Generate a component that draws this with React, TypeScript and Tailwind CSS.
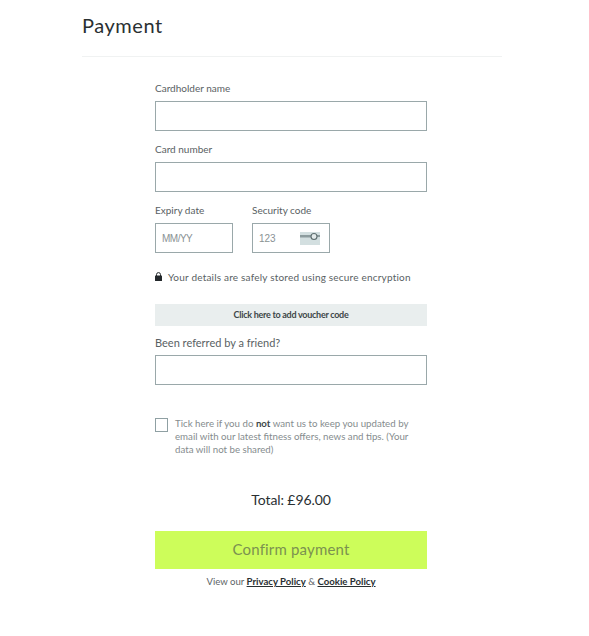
const font = { fontFamily: '"Lato", "Liberation Sans", sans-serif' };

const inputClass = "block h-[30px] w-full border border-[#9aa8aa] bg-white";

function CardIcon() {
  return (
    <svg width="20" height="13" viewBox="0 0 20 13" className="absolute left-[47px] top-[8px]">
      <rect x="0" y="0" width="20" height="13" fill="#d3dfe0" />
      <rect x="0" y="3" width="12" height="2.5" fill="#8d9c9e" />
      <rect x="16" y="3" width="4" height="2" fill="#8d9c9e" />
      <circle cx="14" cy="4.5" r="3" fill="#e3eaea" stroke="#5f6f70" strokeWidth="1.1" />
    </svg>
  );
}

function LockIcon() {
  return (
    <svg width="7" height="9" viewBox="0 0 7 9">
      <path d="M1.5 4V2.6a2 2 0 0 1 4 0V4" fill="none" stroke="#23282b" strokeWidth="1" />
      <rect x="0" y="3.6" width="7" height="5.4" rx="0.6" fill="#23282b" />
    </svg>
  );
}

export default function App() {
  return (
    <div className="min-h-[636px] bg-white pl-[82px] text-[#596163]" style={font}>
      <div className="w-[420px]">
        <div className="h-[57px] border-b border-[#f0f2f2] pt-[12px]">
          <h1 className="text-[20px] leading-[26px] tracking-[0.55px] text-[#2a3032]">Payment</h1>
        </div>

        <form className="ml-[73px] w-[272px] pt-[25px]">
          <label className="mb-[7px] block text-[10px] leading-[12px]">Cardholder name</label>
          <div className={inputClass} />

          <label className="mb-[7px] mt-[12px] block text-[10px] leading-[12px]">Card number</label>
          <div className={inputClass} />

          <div className="mt-[12px] flex gap-[19px]">
            <div className="w-[78px]">
              <label className="mb-[7px] block text-[10px] leading-[12px]">Expiry date</label>
              <div className={`${inputClass} pl-[6px] text-[10px] leading-[29px] tracking-[-0.5px] text-[#8a9294]`} style={{ fontFamily: '"Liberation Sans", sans-serif' }}>
                MM/YY
              </div>
            </div>
            <div className="w-[78px]">
              <label className="mb-[7px] block text-[10px] leading-[12px]">Security code</label>
              <div className={`${inputClass} relative pl-[6px] text-[10px] leading-[30px] text-[#8a9294]`} style={{ fontFamily: '"Liberation Sans", sans-serif' }}>
                123
                <CardIcon />
              </div>
            </div>
          </div>

          <div className="mt-[17px] flex h-[14px] items-center gap-[6px] whitespace-nowrap">
            <span className="-mt-[2px] flex"><LockIcon /></span>
            <span className="text-[10px] leading-[14px] tracking-[0.2px]">Your details are safely stored using secure encryption</span>
          </div>

          <div className="mt-[20px] h-[22px] bg-[#e9eeee] text-center text-[9px] font-bold leading-[21px] tracking-[-0.27px] text-[#3d4648]">
            Click here to add voucher code
          </div>

          <label className="mb-[5px] mt-[10px] block text-[11px] leading-[14px]">Been referred by a friend?</label>
          <div className={inputClass} />

          <div className="mt-[32px] flex gap-[7px]">
            <div className="mt-[1px] h-[14px] w-[13px] shrink-0 border border-[#8fa0a3] bg-white" />
            <p className="w-[245px] text-[9.7px] leading-[13px] text-[#858c8e]">
              Tick here if you do <b className="font-bold text-[#3d4648]">not</b> want us to keep you updated by email with our latest fitness offers, news and tips. (Your data will not be shared)
            </p>
          </div>

          <p className="mt-[35px] text-center text-[14px] leading-[18px] tracking-[-0.1px] text-[#2a3032]">Total: £96.00</p>

          <button type="button" className="mt-[22px] block h-[38px] w-full bg-[#cdfd5a] pb-[2px] text-[15px] tracking-[0.17px] text-[#7b9150]">
            Confirm payment
          </button>

          <p className="mt-[6px] text-center text-[9.6px] leading-[13px] text-[#5d6567]">
            View our <a className="font-bold text-[#2a3032] underline">Privacy Policy</a> &amp; <a className="font-bold text-[#2a3032] underline">Cookie Policy</a>
          </p>
        </form>
      </div>
    </div>
  );
}
